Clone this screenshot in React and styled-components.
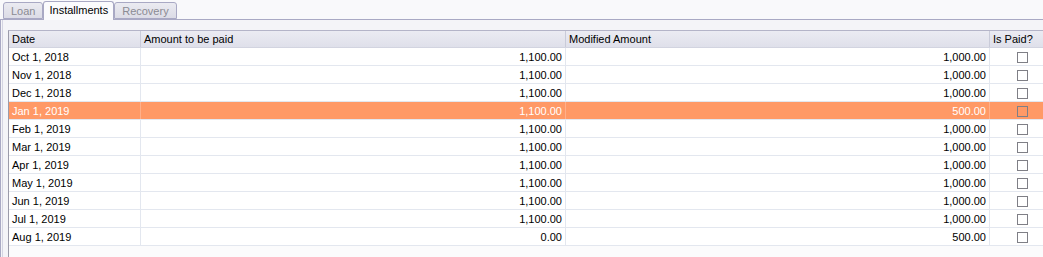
import React from "react";
import styled, { createGlobalStyle } from "styled-components";

const Global = createGlobalStyle`
  html, body { margin: 0; padding: 0; background: #f9f9fb; }
  body { font-family: "Liberation Sans", Arial, sans-serif; font-size: 11px; }
`;

const Screen = styled.div`
  width: 1043px;
  height: 257px;
  overflow: hidden;
  background: #f9f9fb;
  display: flex;
  flex-direction: column;
`;

const TabStrip = styled.div`
  display: flex;
  align-items: flex-end;
  height: 19px;
  padding-left: 3px;
  box-sizing: border-box;
`;

const Tab = styled.div`
  height: ${(p) => (p.$active ? "19px" : "17px")};
  box-sizing: border-box;
  padding: ${(p) => (p.$active ? "2px 5px 0 5px" : "2px 7px 0 7px")};
  margin-bottom: ${(p) => (p.$active ? "-1px" : "0")};
  border: 1px solid #a9a9c4;
  border-bottom: ${(p) => (p.$active ? "none" : "1px solid #a9a9c4")};
  border-radius: 3px 3px 0 0;
  background: ${(p) => (p.$active ? "#fbfbfd" : "linear-gradient(#ebebf1, #dcdce6)")};
  color: ${(p) => (p.$active ? "#000" : "#8b8b93")};
  position: relative;
  z-index: ${(p) => (p.$active ? 2 : 1)};
  white-space: nowrap;
  line-height: 13px;
`;

const Panel = styled.div`
  flex: 1;
  border-top: 1px solid #a9a9c4;
  border-left: 1px solid #a9a9c4;
  background: #f4f4f8;
  padding: 10px 0 0 7px;
  display: flex;
  position: relative;
  z-index: 1;
  &::before {
    content: "";
    position: absolute;
    left: 1px;
    top: 0;
    bottom: 0;
    width: 1px;
    background: #d4d4e2;
  }
`;

const Grid = styled.div`
  flex: 1;
  border-top: 1px solid #b4b4c8;
  border-left: 1px solid #9b9baa;
  background: #fbfbfc;
  display: flex;
  flex-direction: column;
`;

const cols = "132px 425px 424px 66px";

const HeaderRow = styled.div`
  display: grid;
  grid-template-columns: ${cols};
  height: 16px;
  background: linear-gradient(#ebebf2, #dfe0ea);
  border-bottom: 1px solid #d2d4e0;
`;

const HeaderCell = styled.div`
  padding: 2px 3px 0 3px;
  border-right: 1px solid #c9cbd9;
  color: #000;
  line-height: 13px;
  white-space: nowrap;
`;

const Row = styled.div`
  display: grid;
  grid-template-columns: ${cols};
  height: 18px;
  box-sizing: border-box;
  border-bottom: 1px solid #e3e7ef;
  background: ${(p) => (p.$selected ? "#ff9966" : "#ffffff")};
  color: ${(p) => (p.$selected ? "#ffffff" : "#000000")};
`;

const Cell = styled.div`
  display: flex;
  align-items: center;
  justify-content: ${(p) => (p.$align === "right" ? "flex-end" : p.$align === "center" ? "center" : "flex-start")};
  padding: 1px 3px 0 3px;
  border-right: 1px solid ${(p) => (p.$selected ? "#ffb08a" : "#e3e7ef")};
  white-space: nowrap;
  line-height: 13px;
`;

const Check = styled.span`
  width: 11px;
  height: 11px;
  box-sizing: border-box;
  border: 1px solid #7f7f86;
  background: ${(p) => (p.$selected ? "#ff9966" : "#ffffff")};
`;

const data = [
  ["Oct 1, 2018", "1,100.00", "1,000.00"],
  ["Nov 1, 2018", "1,100.00", "1,000.00"],
  ["Dec 1, 2018", "1,100.00", "1,000.00"],
  ["Jan 1, 2019", "1,100.00", "500.00"],
  ["Feb 1, 2019", "1,100.00", "1,000.00"],
  ["Mar 1, 2019", "1,100.00", "1,000.00"],
  ["Apr 1, 2019", "1,100.00", "1,000.00"],
  ["May 1, 2019", "1,100.00", "1,000.00"],
  ["Jun 1, 2019", "1,100.00", "1,000.00"],
  ["Jul 1, 2019", "1,100.00", "1,000.00"],
  ["Aug 1, 2019", "0.00", "500.00"],
];

export default function App() {
  return (
    <Screen>
      <Global />
      <TabStrip>
        <Tab>Loan</Tab>
        <Tab $active>Installments</Tab>
        <Tab>Recovery</Tab>
      </TabStrip>
      <Panel>
        <Grid>
          <HeaderRow>
            <HeaderCell>Date</HeaderCell>
            <HeaderCell>Amount to be paid</HeaderCell>
            <HeaderCell>Modified Amount</HeaderCell>
            <HeaderCell>Is Paid?</HeaderCell>
          </HeaderRow>
          {data.map((r, i) => {
            const sel = i === 3;
            return (
              <Row key={r[0]} $selected={sel}>
                <Cell $selected={sel}>{r[0]}</Cell>
                <Cell $selected={sel} $align="right">{r[1]}</Cell>
                <Cell $selected={sel} $align="right">{r[2]}</Cell>
                <Cell $selected={sel} $align="center">
                  <Check $selected={sel} />
                </Cell>
              </Row>
            );
          })}
        </Grid>
      </Panel>
    </Screen>
  );
}
